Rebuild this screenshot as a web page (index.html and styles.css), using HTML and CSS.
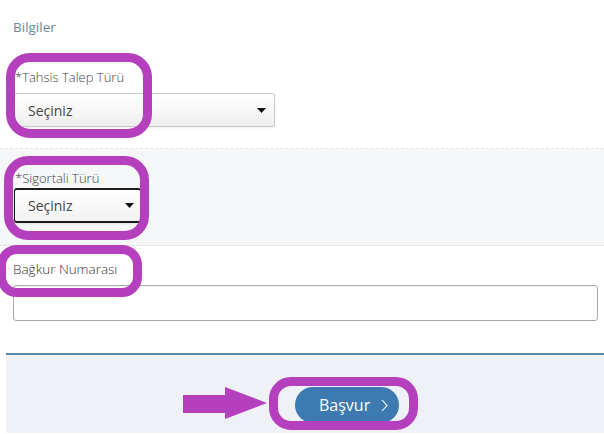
FILE: index.html
```html
<!DOCTYPE html>
<html lang="tr">
<head>
    <meta charset="UTF-8">
    <title>Bilgiler</title>
    <link rel="stylesheet" href="styles.css">
</head>
<body>
<div class="page">
    <div class="intro">Bilgiler</div>

    <div class="section first">
        <label class="field-label" for="talep">*Tahsis Talep Türü</label>
        <div class="select-wrap wide">
            <select id="talep" class="select">
                <option>Seçiniz</option>
            </select>
            <svg class="caret" width="9" height="5" viewBox="0 0 9 5"><path d="M0 0H9L4.5 5Z" fill="#111"/></svg>
        </div>
    </div>

    <div class="section grey">
        <label class="field-label" for="sigortali">*Sigortali Türü</label>
        <div class="select-wrap narrow">
            <select id="sigortali" class="select active">
                <option>Seçiniz</option>
            </select>
            <svg class="caret" width="9" height="5" viewBox="0 0 9 5"><path d="M0 0H9L4.5 5Z" fill="#111"/></svg>
        </div>
    </div>

    <div class="section last">
        <label class="field-label big" for="bagkur">Bağkur Numarası</label>
        <input type="text" id="bagkur" class="text-input">
    </div>

    <div class="footer">
        <button type="button" class="apply">Başvur
            <svg width="7" height="13" viewBox="0 0 7 13"><path d="M1 1L6 6.5L1 12" fill="none" stroke="#fff" stroke-width="1.1"/></svg>
        </button>
    </div>

    <!-- isaretlemeler -->
    <div class="mark m1"></div>
    <div class="mark m2"></div>
    <div class="mark m3"></div>
    <div class="mark m4"></div>
    <svg class="arrow" width="85" height="34" viewBox="0 0 85 34">
        <rect x="0" y="9" width="44" height="18" fill="#b540bd"/>
        <path d="M42 1L84 17L42 33Z" fill="#b540bd"/>
    </svg>
</div>
</body>
</html>
```

FILE: styles.css
```css
body {
    margin: 0;
    font-family: "Open Sans", Arial, sans-serif;
    background: #fff;
    overflow: hidden;
}
.page {
    position: relative;
    height: 434px;
    overflow: hidden;
}
.intro {
    padding: 18px 13px 0;
    font-size: 13.5px;
    line-height: 18px;
    color: #6a88a2;
}
.section {
    padding: 0 13px;
}
.section.first {
    padding-top: 32px;
    padding-bottom: 21px;
    border-bottom: 1px dashed #e2e4e6;
}
.section.grey {
    background: #f6f7f8;
    padding-top: 20px;
    padding-bottom: 22px;
    border-bottom: 1px solid #e8e9ea;
}
.section.last {
    padding-top: 14px;
    padding-bottom: 32px;
}
.field-label {
    display: block;
    font-size: 13px;
    line-height: 18px;
    color: #444;
    font-weight: 300;
}
.field-label.big {
    font-size: 13.5px;
    color: #333;
}
.section.first .field-label {
    margin-bottom: 7px;
    padding-left: 2px;
}
.section.grey .field-label {
    margin-bottom: 1px;
    padding-left: 2px;
}
.section.last .field-label {
    margin-bottom: 7px;
}
.select-wrap {
    position: relative;
    margin-left: 1px;
}
.select-wrap.wide {
    width: 261px;
}
.select-wrap.narrow {
    width: 127px;
}
.select {
    appearance: none;
    -webkit-appearance: none;
    display: block;
    width: 100%;
    height: 34px;
    padding: 0 0 0 13px;
    font-family: "Open Sans", Arial, sans-serif;
    font-size: 14px;
    color: #444;
    background: linear-gradient(#ffffff, #eeeeee);
    border: 1px solid #c8c8c8;
    border-radius: 3px;
    box-shadow: 0 1px 2px rgba(0,0,0,0.08);
}
.select.active {
    height: 35px;
    background: linear-gradient(#ffffff, #f2f2f2);
    border: 1px solid #1b1b1b;
    border-top-width: 2px;
    border-bottom-width: 2px;
}
.caret {
    position: absolute;
    right: 9px;
    top: 15px;
}
.select-wrap.narrow .caret {
    right: 7px;
}
.text-input {
    display: block;
    box-sizing: border-box;
    width: 585px;
    height: 36px;
    border: 1px solid #a9a9a9;
    border-radius: 3px;
    box-shadow: inset 0 1px 1px rgba(0,0,0,0.05);
    font-family: "Open Sans", Arial, sans-serif;
    font-size: 14px;
}
.footer {
    box-sizing: border-box;
    margin-left: 6px;
    height: 80px;
    border-top: 2px solid #5b87a8;
    background: #eef1f6;
    padding: 32px 0 0 289px;
}
.apply {
    display: flex;
    align-items: center;
    gap: 11px;
    height: 36px;
    width: 104px;
    padding: 0 0 0 24px;
    border: none;
    border-radius: 18px;
    background: #3e7ab2;
    color: #fff;
    font-family: "Open Sans", Arial, sans-serif;
    font-size: 16px;
    cursor: pointer;
}
.mark {
    position: absolute;
    border: 9px solid #b540bd;
    border-radius: 24px;
}
.m1 {
    left: 6px;
    top: 53px;
    width: 128px;
    height: 67px;
}
.m2 {
    left: 4px;
    top: 156px;
    width: 127px;
    height: 66px;
}
.m3 {
    left: -3px;
    top: 245px;
    width: 127px;
    height: 34px;
    border-radius: 20px;
}
.m4 {
    left: 269px;
    top: 377px;
    width: 131px;
    height: 35px;
    border-radius: 22px;
}
.arrow {
    position: absolute;
    left: 183px;
    top: 386px;
}
```
